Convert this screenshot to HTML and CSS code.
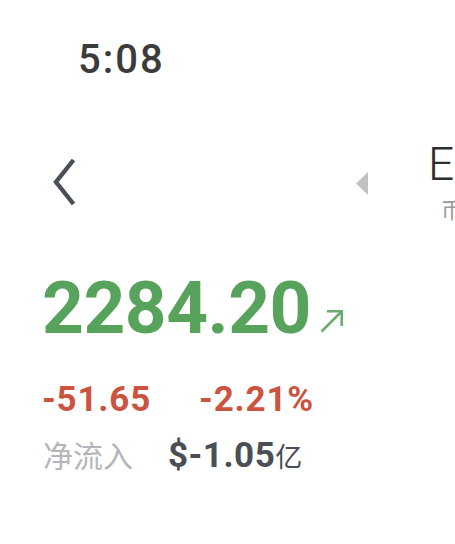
FILE: index.html
```html
<!DOCTYPE html>
<html lang="zh-CN">

<head>
    <meta http-equiv="Content-Type" content="text/html; charset=UTF-8" />
    <title>Quote</title>
    <link rel="stylesheet" href="styles.css">
</head>

<body>
    <div class="statusBar">5:08</div>

    <div class="navBar">
        <svg class="backIcon" width="24" height="48" viewBox="0 0 24 48">
            <polyline points="21.5,2 4,24 21.5,46" fill="none" stroke="#4a4f57" stroke-width="4.4" />
        </svg>
        <svg class="prevIcon" width="13" height="23" viewBox="0 0 13 23">
            <polygon points="13,0 13,23 1,11.5" fill="#c2c2c2" />
        </svg>
        <div class="titleBlock">
            <div class="titleMain">ETH</div>
            <div class="titleSub">币安</div>
        </div>
    </div>

    <div class="priceRow">
        <span class="priceValue">2284.20</span>
        <svg class="trendIcon" width="24" height="24" viewBox="0 0 24 24">
            <line x1="1.5" y1="22.5" x2="21" y2="3" stroke="#6bae6e" stroke-width="2.6" />
            <polyline points="7,2.3 21.7,2.3 21.7,17" fill="none" stroke="#6bae6e" stroke-width="2.6" />
        </svg>
    </div>

    <div class="changeRow">
        <span class="changeValue">-51.65</span>
        <span class="changePercent">-2.21%</span>
    </div>

    <div class="flowRow">
        <span class="flowLabel">净流入</span>
        <span class="flowValue">$-1.05<span class="flowUnit">亿</span></span>
    </div>
</body>

</html>
```

FILE: styles.css
```css
html, body {
    margin: 0;
    padding: 0;
    background: #ffffff;
    overflow: hidden;
}
body {
    font-family: Roboto, "Noto Sans CJK SC", sans-serif;
    white-space: nowrap;
}

.statusBar {
    box-sizing: border-box;
    height: 141px;
    padding: 40px 0 0 78px;
    font-size: 40px;
    font-weight: 500;
    line-height: 1;
    letter-spacing: 2px;
    color: #3b3b3b;
}

.navBar {
    display: flex;
    align-items: flex-start;
    height: 131px;
}
.backIcon {
    flex: none;
    margin: 17px 0 0 52px;
}
.prevIcon {
    flex: none;
    margin: 31px 0 0 279px;
}
.titleBlock {
    flex: none;
    margin-left: 60px;
}
.titleMain {
    font-size: 46px;
    font-weight: 300;
    line-height: 1;
    color: #2e2e2e;
}
.titleSub {
    margin: 13px 0 0 13px;
    font-size: 22px;
    line-height: 1;
    color: #9a9a9a;
}

.priceRow {
    display: flex;
    align-items: flex-end;
    padding-left: 42px;
}
.priceValue {
    font-size: 73px;
    font-weight: 700;
    line-height: 1;
    letter-spacing: -0.5px;
    color: #58a35b;
}
.trendIcon {
    flex: none;
    margin: 0 0 12px 9px;
}

.changeRow {
    display: flex;
    gap: 48px;
    margin-top: 37px;
    padding-left: 42px;
    font-size: 35px;
    font-weight: 700;
    line-height: 1;
    letter-spacing: 0.8px;
    color: #cb5340;
}

.flowRow {
    display: flex;
    align-items: baseline;
    gap: 35px;
    margin-top: 21px;
    padding-left: 43px;
    line-height: 1;
}
.flowLabel {
    font-size: 30px;
    color: #b2b6ba;
}
.flowValue {
    font-size: 35px;
    font-weight: 700;
    letter-spacing: 0.5px;
    color: #4a4e55;
}
.flowUnit {
    font-size: 27px;
    font-weight: 400;
    letter-spacing: 0;
}
```
